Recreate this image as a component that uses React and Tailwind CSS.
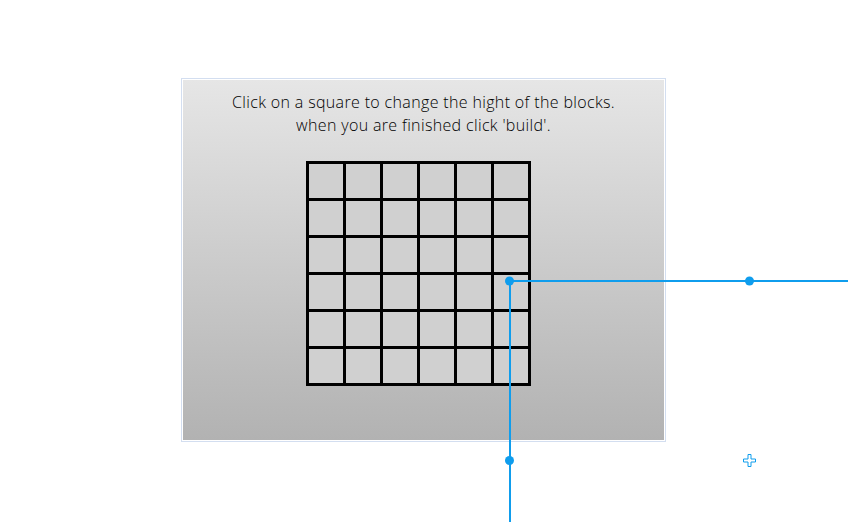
import React from "react";

const SIZE = 6;

function BlockGrid() {
  const cells = Array.from({ length: SIZE * SIZE }, (_, i) => i);
  return (
    <div className="grid grid-cols-6 gap-[3px] bg-black p-[3px] w-max">
      {cells.map((i) => (
        <div key={i} className="w-[34px] h-[34px] bg-[#d0d0d0]" />
      ))}
    </div>
  );
}

// connector handles drawn over the page
function Connectors() {
  return (
    <svg
      className="absolute left-0 top-0 pointer-events-none"
      width="848"
      height="522"
      viewBox="0 0 848 522"
    >
      <line x1="509.5" y1="281" x2="848" y2="281" stroke="#0f9ded" strokeWidth="2" />
      <line x1="510" y1="281" x2="510" y2="522" stroke="#0f9ded" strokeWidth="2" />
      <circle cx="509.5" cy="281" r="4.5" fill="#0f9ded" />
      <circle cx="749.5" cy="281" r="4.5" fill="#0f9ded" />
      <circle cx="509.5" cy="460.5" r="4.5" fill="#0f9ded" />
      <path
        d="M748 454.5h3v4.5h4.5v3h-4.5v4.5h-3v-4.5h-4.5v-3h4.5z"
        fill="#ffffff"
        stroke="#0f9ded"
        strokeWidth="1"
      />
    </svg>
  );
}

export default function App() {
  return (
    <div className="relative w-[848px] h-[522px] bg-white overflow-hidden font-['Open_Sans',sans-serif]">
      <div className="pt-[78px] pl-[181px]">
        <div className="w-[485px] h-[364px] border border-[#d3def0]">
          <div className="h-full border border-white bg-gradient-to-b from-[#e6e6e6] to-[#b2b2b2] pt-[11px]">
            <p className="text-center text-[16px] leading-[23px] font-light text-black tracking-[0.35px]">
              Click on a square to change the hight of the blocks.
              <br />
              when you are finished click 'build'.
            </p>
            <div className="mt-[24px] ml-[123px]">
              <BlockGrid />
            </div>
          </div>
        </div>
      </div>
      <Connectors />
    </div>
  );
}
